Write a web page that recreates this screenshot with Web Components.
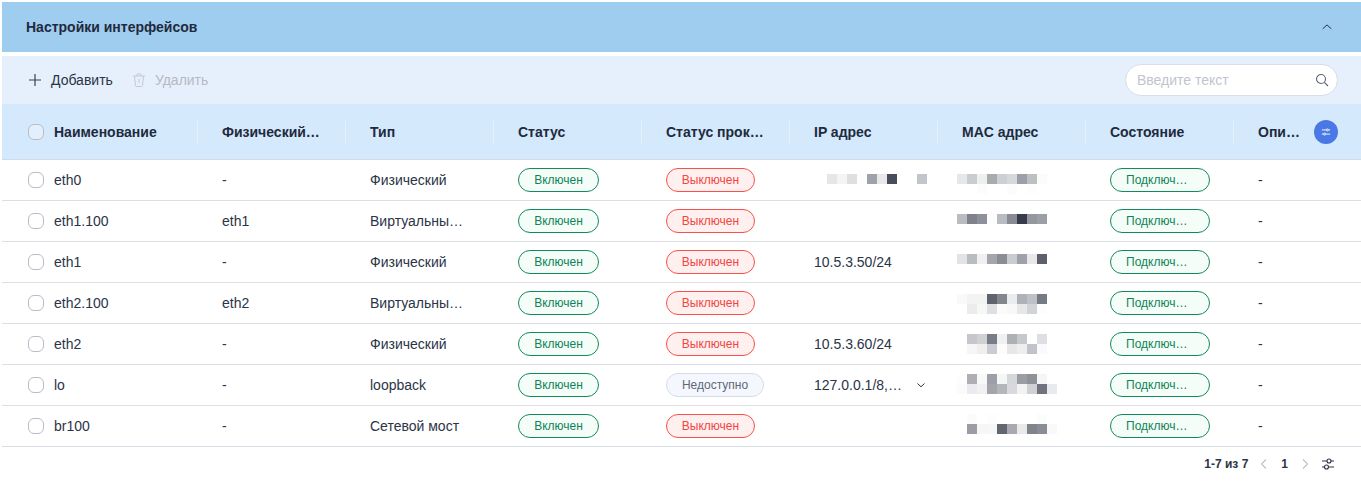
<!DOCTYPE html>
<html lang="ru">
<head>
<meta charset="utf-8">
<title>Настройки интерфейсов</title>
<style>
    html, body { margin: 0; background: #fff; }
    body {
        padding: 2px 0 0 2px;
        font-family: "Liberation Sans", "Noto Sans", sans-serif;
        font-size: 14px;
        color: #2b3446;
    }
</style>
</head>
<body>
<interfaces-panel></interfaces-panel>

<script>
const COLUMNS = '196px repeat(7, 148px) 1fr';

const ROWS = [
    {name: 'eth0', parent: '-', type: 'Физический', proxy: 'off', ip: '', ipMask: [['e6e6e8', 'f4f4f5', 'dfdfe1', 'fdfdfd', '9fa2a9', 'e8e8ea', '474d5a', 'ffffff', 'ffffff', 'c3c5cc']], top: 14,
        mac: [['e6e7e9', 'cbcccf', 'eef0f0', 'aaabae', 'ccd0d5', 'd6d8db', '9c9fa8', 'bebfc2', 'fafcfb'], ['ffffff', 'ffffff', 'fcfcfc', 'ffffff', 'ffffff', 'fcfcfc', 'ffffff', 'fdfdfd', 'ffffff']]},
    {name: 'eth1.100', parent: 'eth1', type: 'Виртуальны…', proxy: 'off', ip: '', top: 13,
        mac: [['b9bcc1', '7f828b', '8d9199', 'fcfcfc', 'b8bbbf', '888b93', '363c4b', '95979f', '9d9fa6']]},
    {name: 'eth1', parent: '-', type: 'Физический', proxy: 'off', ip: '10.5.3.50/24', top: 12,
        mac: [['e3e3e5', 'babdc0', 'f0f0f1', 'a4a6ab', '8b8d92', 'cbcbd2', '9fa1aa', 'e8e8ea', '5d606b']]},
    {name: 'eth2.100', parent: 'eth2', type: 'Виртуальны…', proxy: 'off', ip: '', top: 11,
        mac: [['f9f9f9', 'f3f3f4', 'f2f3f3', '5f636e', '83868c', 'ebecef', 'afb1b8', 'bfc0c5', '767a84'],
              ['ffffff', 'ececed', 'f6f7f7', 'dedfe3', 'fbfbfc', 'f8f8f9', 'e6e7e8', 'd2d3d6', 'fdfdfd']]},
    {name: 'eth2', parent: '-', type: 'Физический', proxy: 'off', ip: '10.5.3.60/24', top: 10,
        mac: [['ffffff', 'c6c7ca', 'd0d1d4', '777c86', 'eff1f0', 'afb0b4', 'c7c8cb', 'ffffff', 'dedfe1'],
              ['ffffff', 'f6f6f6', 'efefef', 'cbccd1', 'fcfcfd', 'e7e7e8', 'eeeeee', 'c2c3c9', 'fafafc']]},
    {name: 'lo', parent: '-', type: 'loopback', proxy: 'na', ip: '127.0.0.1/8,…', chevron: true, top: 9,
        mac: [['fdfdfd', 'aeafb3', 'f8f8f9', '9d9fa8', 'f5f7f6', 'd6d7da', '9b9da4', '8f9198', 'f5f5f6'],
              ['fbfbfb', 'eaebee', 'f1f1f3', 'a4a5aa', 'b3b7bb', 'd8d9dc', 'f2f2f3', 'cfd0d5', '70737e', 'e9eaed']]},
    {name: 'br100', parent: '-', type: 'Сетевой мост', proxy: 'off', ip: '', top: 8,
        mac: [['ffffff', 'fbfbfb', 'ffffff', 'fdfdfd', 'ffffff', 'ffffff', 'ffffff', 'ffffff', 'fcfcfc'],
              ['ffffff', '9b9da3', 'f6f6f7', 'f6f7f7', '61666f', 'a9aab0', 'e9e9ea', '80828c', '8a8d96', 'f9f9fa']]}
];

class UiCheckbox extends HTMLElement {
    constructor() {
        super();
        this.attachShadow({mode: 'open'}).innerHTML = `
            <style>
                :host {
                    display: block;
                    width: 16px;
                    height: 16px;
                    box-sizing: border-box;
                    border: 1px solid #b9bdc9;
                    border-radius: 6px;
                    background: #fff;
                }
                :host([head]) { background: #e3effb; }
            </style>
        `;
    }
}

class StatusBadge extends HTMLElement {
    constructor() {
        super();
        this.attachShadow({mode: 'open'}).innerHTML = `
            <style>
                :host {
                    display: inline-flex;
                    align-items: center;
                    justify-content: center;
                    box-sizing: border-box;
                    height: 24px;
                    border: 1px solid;
                    border-radius: 12px;
                    font-size: 12px;
                    white-space: nowrap;
                }
                :host([kind="on"]) { width: 81px; color: #0d8457; border-color: #118a5c; background: #f5fdf8; }
                :host([kind="off"]) { width: 89px; color: #f2453f; border-color: #fb4f49; background: #fff0f0; }
                :host([kind="na"]) { width: 98px; color: #5f677a; border-color: #d6dce8; background: #f4f7fd; }
                :host([kind="link"]) {
                    width: 100px;
                    justify-content: flex-start;
                    padding-left: 15px;
                    color: #0d8457;
                    border-color: #118a5c;
                    background: #f5fdf8;
                }
            </style>
            <slot></slot>
        `;
    }
}

// blurred-out addresses, drawn as a mosaic of 10px cells
class PixelMask extends HTMLElement {
    constructor() {
        super();
        this.attachShadow({mode: 'open'});
    }

    set cells(lines) {
        const html = lines.map(line => line.map(c => `<i style="background:#${c}"></i>`).join('')).join('');
        this.shadowRoot.innerHTML = `
            <style>
                :host {
                    display: grid;
                    grid-template-columns: repeat(10, 10px);
                    grid-auto-rows: 10px;
                    align-self: flex-start;
                    width: 100px;
                }
                i { display: block; }
                i.br { grid-column: 1; }
            </style>
            ${html}
        `;
        let index = 0;
        const items = this.shadowRoot.querySelectorAll('i');
        lines.forEach(line => {
            items[index].className = 'br';
            index += line.length;
        });
    }
}

class PanelHeader extends HTMLElement {
    constructor() {
        super();
        this.attachShadow({mode: 'open'}).innerHTML = `
            <style>
                :host {
                    display: flex;
                    align-items: center;
                    justify-content: space-between;
                    height: 50px;
                    padding: 0 27px 0 24px;
                    background: #9fcdf0;
                    color: #1f2a3d;
                    font-weight: 700;
                }
                svg { display: block; }
            </style>
            <slot></slot>
            <svg width="14" height="14" viewBox="0 0 14 14" fill="none" stroke="#2b3446" stroke-width="1">
                <path d="M2.700 8.800 7 4.900l4.300 3.900"/>
            </svg>
        `;
    }
}

class IfaceToolbar extends HTMLElement {
    constructor() {
        super();
        this.attachShadow({mode: 'open'}).innerHTML = `
            <style>
                :host {
                    display: flex;
                    align-items: center;
                    height: 48px;
                    margin-top: 4px;
                    padding: 0 23px 0 26px;
                    background: #e6effc;
                }
                .action { display: flex; align-items: center; gap: 9px; }
                .delete { margin-left: 19px; color: #b6bac3; }
                .search {
                    display: flex;
                    align-items: center;
                    justify-content: space-between;
                    box-sizing: border-box;
                    width: 213px;
                    height: 32px;
                    margin-left: auto;
                    padding: 0 8px 0 11px;
                    border: 1px solid #d8dde6;
                    border-radius: 16px;
                    background: #fff;
                    color: #c1c5cd;
                }
                svg { display: block; }
            </style>
            <div class="action">
                <svg width="14" height="14" viewBox="0 0 14 14" fill="none" stroke="#3a4252" stroke-width="1.2">
                    <path d="M7 1v12M1 7h12"/>
                </svg>
                <span>Добавить</span>
            </div>
            <div class="action delete">
                <svg width="14" height="14" viewBox="0 0 14 14" fill="none" stroke="#c6c9d0" stroke-width="1">
                    <path d="M1 3h12M5 3V1h4v2M2.500 3l1 9.500q.1 1 1 1h5q.9 0 1-1l1-9.500M7 6v4"/>
                </svg>
                <span>Удалить</span>
            </div>
            <div class="search">
                <span>Введите текст</span>
                <svg width="14" height="14" viewBox="0 0 14 14" fill="none" stroke="#5d6472" stroke-width="1.100">
                    <circle cx="6" cy="6" r="4.500"/>
                    <path d="m9.300 9.300 3.700 3.700"/>
                </svg>
            </div>
        `;
    }
}

class IfaceTable extends HTMLElement {
    constructor() {
        super();
        const heads = ['Физический…', 'Тип', 'Статус', 'Статус прок…', 'IP адрес', 'MAC адрес', 'Состояние'];
        this.attachShadow({mode: 'open'}).innerHTML = `
            <style>
                :host { display: block; }
                .head, .row { display: grid; grid-template-columns: ${COLUMNS}; }
                .head {
                    position: relative;
                    height: 56px;
                    box-sizing: border-box;
                    background: #d4e9fb;
                    border-bottom: 1px solid #cfdbe6;
                    color: #1f2a3d;
                    font-weight: 700;
                }
                .head > div { display: flex; align-items: center; padding-left: 24px; position: relative; }
                .head > div:not(:first-child)::before {
                    content: "";
                    position: absolute;
                    left: -1px;
                    top: 17px;
                    width: 1px;
                    height: 22px;
                    background: #e4f0fb;
                }
                .head > div:first-child, .row > div:first-child { gap: 10px; padding-left: 26px; }
                .row { height: 41px; box-sizing: border-box; border-bottom: 1px solid #dcdfe4; }
                .row:last-child { border-bottom-color: #d9dfe6; }
                .row > div { display: flex; align-items: center; padding-left: 24px; white-space: nowrap; }
                .row > div:first-child { padding-left: 26px; }
                .masked { margin-left: -5px; }
                .ip { gap: 14px; }
                .settings {
                    position: absolute;
                    top: 16px;
                    right: 23px;
                    display: flex;
                    align-items: center;
                    justify-content: center;
                    width: 24px;
                    height: 24px;
                    border-radius: 50%;
                    background: #4a78e6;
                }
                svg { display: block; }
            </style>
            <div class="head">
                <div><ui-checkbox head></ui-checkbox><span>Наименование</span></div>
                ${heads.map(h => `<div>${h}</div>`).join('')}
                <div>Опи…</div>
                <span class="settings">
                    <svg width="10" height="10" viewBox="0 0 12 12" fill="none" stroke="#fff" stroke-width="1.100">
                        <path d="M1 3.500h5.500M9 3.500h2M1 8.500h2M5.500 8.500H11"/>
                        <circle cx="7.700" cy="3.500" r="1.200"/>
                        <circle cx="4.300" cy="8.500" r="1.200"/>
                    </svg>
                </span>
            </div>
            <div class="body"></div>
        `;

        const body = this.shadowRoot.querySelector('.body');
        ROWS.forEach(row => {
            const el = document.createElement('div');
            el.className = 'row';
            el.innerHTML = `
                <div><ui-checkbox></ui-checkbox><span>${row.name}</span></div>
                <div>${row.parent}</div>
                <div>${row.type}</div>
                <div><status-badge kind="on">Включен</status-badge></div>
                <div>${row.proxy === 'na'
                    ? '<status-badge kind="na">Недоступно</status-badge>'
                    : '<status-badge kind="off">Выключен</status-badge>'}</div>
                <div class="ip">${row.ipMask ? '<pixel-mask class="ipmask"></pixel-mask>' : `<span>${row.ip}</span>`}${row.chevron ? `
                    <svg width="10" height="10" viewBox="0 0 10 10" fill="none" stroke="#2b3446" stroke-width="1">
                        <path d="M1.500 3.500 5 6.800l3.500-3.300"/>
                    </svg>` : ''}</div>
                <div class="masked"><pixel-mask class="macmask"></pixel-mask></div>
                <div><status-badge kind="link">Подключ…</status-badge></div>
                <div>-</div>
            `;
            const mac = el.querySelector('.macmask');
            mac.cells = row.mac;
            mac.style.marginTop = row.top + 'px';
            const ipMask = el.querySelector('.ipmask');
            if (ipMask) {
                ipMask.cells = row.ipMask;
                ipMask.style.marginTop = row.top + 'px';
                ipMask.style.marginLeft = '13px';
            }
            body.appendChild(el);
        });
    }
}

class TableFooter extends HTMLElement {
    constructor() {
        super();
        this.attachShadow({mode: 'open'}).innerHTML = `
            <style>
                :host {
                    display: flex;
                    align-items: center;
                    justify-content: flex-end;
                    height: 34px;
                    padding-right: 26px;
                    font-size: 12px;
                    font-weight: 700;
                    color: #2b3446;
                }
                .total { margin-right: 11px; }
                .page { margin: 0 12px; }
                svg { display: block; }
                .tune { margin-left: 11px; }
            </style>
            <span class="total">1-7 из 7</span>
            <svg width="10" height="12" viewBox="0 0 10 12" fill="none" stroke="#bcc0c8" stroke-width="1.100"><path d="M7 1.500 2.500 6 7 10.500"/></svg>
            <span class="page">1</span>
            <svg width="10" height="12" viewBox="0 0 10 12" fill="none" stroke="#bcc0c8" stroke-width="1.100"><path d="M3 1.500 7.500 6 3 10.500"/></svg>
            <svg class="tune" width="14" height="14" viewBox="0 0 14 14" fill="none" stroke="#2b3446" stroke-width="1.100">
                <path d="M1 4h5M10 4h3M1 10h2.500M7.500 10H13"/>
                <circle cx="8" cy="4" r="2"/>
                <circle cx="5.500" cy="10" r="2"/>
            </svg>
        `;
    }
}

class InterfacesPanel extends HTMLElement {
    constructor() {
        super();
        this.attachShadow({mode: 'open'}).innerHTML = `
            <style>
                :host { display: block; }
            </style>
            <panel-header>Настройки интерфейсов</panel-header>
            <iface-toolbar></iface-toolbar>
            <iface-table></iface-table>
            <table-footer></table-footer>
        `;
    }
}

customElements.define('ui-checkbox', UiCheckbox);
customElements.define('status-badge', StatusBadge);
customElements.define('pixel-mask', PixelMask);
customElements.define('panel-header', PanelHeader);
customElements.define('iface-toolbar', IfaceToolbar);
customElements.define('iface-table', IfaceTable);
customElements.define('table-footer', TableFooter);
customElements.define('interfaces-panel', InterfacesPanel);
</script>
</body>
</html>
